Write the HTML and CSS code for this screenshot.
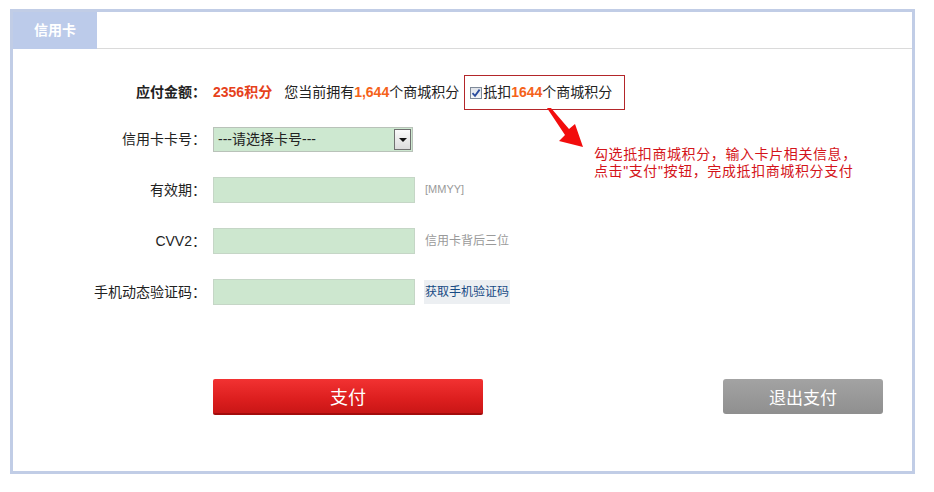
FILE: index.html
```html
<!DOCTYPE html>
<html lang="zh-CN">
<head>
    <meta charset="UTF-8">
    <meta name="viewport" content="width=device-width, initial-scale=1.0">
    <link rel="stylesheet" href="styles.css">
    <title>信用卡支付</title>
</head>
<body>
    <div class="frame">
        <div class="tabs">
            <span class="tab">信用卡</span>
        </div>

        <div class="form">
            <div class="row row-amount">
                <span class="label strong">应付金额：</span>
                <span class="amount">2356积分</span>
                <span class="own">您当前拥有<b class="points">1,644</b>个商城积分</span>
                <span class="deduct">
                    <span class="check">
                        <svg width="10" height="10" viewBox="0 0 10 10"><path d="M1.5 5.2 L4 7.8 L8.6 1.6" fill="none" stroke="#2b4c9e" stroke-width="1.8"/></svg>
                    </span>抵扣<b class="points">1644</b>个商城积分
                </span>
            </div>

            <div class="row">
                <span class="label">信用卡卡号：</span>
                <div class="select">
                    <span class="select-text">---请选择卡号---</span>
                    <span class="select-btn"></span>
                </div>
            </div>

            <div class="row">
                <span class="label">有效期：</span>
                <input class="field" type="text">
                <span class="hint hint-small">[MMYY]</span>
            </div>

            <div class="row">
                <span class="label">CVV2：</span>
                <input class="field" type="text">
                <span class="hint">信用卡背后三位</span>
            </div>

            <div class="row">
                <span class="label">手机动态验证码：</span>
                <input class="field" type="text">
                <a class="sms" href="#">获取手机验证码</a>
            </div>

            <div class="actions">
                <button class="btn-pay">支付</button>
                <button class="btn-exit">退出支付</button>
            </div>
        </div>

        <!-- 提示说明 -->
        <svg class="arrow" width="42" height="44" viewBox="0 0 42 44">
            <polygon points="2,2 6,2 24,23 30,18 38,41 14,35 20,29" fill="#f20d0d"/>
        </svg>
        <p class="note">勾选抵扣商城积分，输入卡片相关信息，<br>点击"支付"按钮，完成抵扣商城积分支付</p>
    </div>
</body>
</html>
```

FILE: styles.css
```css
body{
    margin: 0;
    padding: 9px 0 0 10px;
    font-family: "Liberation Sans", "Noto Sans CJK SC", sans-serif;
    font-size: 14px;
    line-height: 1.2;
    color: #222;
    background: #fff;
}
.frame{
    position: relative;
    box-sizing: border-box;
    width: 905px;
    height: 465px;
    border: 3px solid #c1cde6;
}
.tabs{
    display: flex;
    height: 36px;
    border-bottom: 1px solid #dadada;
}
.tab{
    display: flex;
    align-items: center;
    justify-content: center;
    width: 84px;
    height: 37px;
    background: #bccbea;
    color: #fff;
    font-weight: bold;
}
.form{
    padding-top: 26px;
}
.row{
    display: flex;
    align-items: center;
    height: 26px;
    margin-bottom: 25px;
}
.row-amount{
    height: 35px;
    margin-bottom: 16px;
}
.label{
    width: 193px;
    margin-right: 7px;
    text-align: right;
}
.strong{
    font-weight: bold;
}
.amount{
    color: #e6411b;
    font-weight: bold;
}
.own{
    margin-left: 12px;
}
.points{
    color: #f5621a;
}
.deduct{
    display: flex;
    align-items: center;
    box-sizing: border-box;
    height: 35px;
    margin-left: 5px;
    padding: 0 12px 0 5px;
    border: 1px solid #b3262a;
}
.check{
    display: flex;
    align-items: center;
    justify-content: center;
    box-sizing: border-box;
    width: 12px;
    height: 12px;
    margin-right: 1px;
    border: 1px solid #7f8a99;
    background: linear-gradient(#dfe3ea, #f6f7f9);
}
.select{
    display: flex;
    align-items: center;
    justify-content: space-between;
    box-sizing: border-box;
    width: 200px;
    height: 25px;
    padding: 0 1px 0 4px;
    border: 1px solid #b9c2b9;
    background: #cde8d0;
}
.select-btn{
    position: relative;
    box-sizing: border-box;
    width: 17px;
    height: 21px;
    border: 1px solid #707070;
    background: linear-gradient(#fafafa, #dcdcdc);
}
.select-btn::after{
    content: "";
    position: absolute;
    left: 4px;
    top: 8px;
    border-left: 4px solid transparent;
    border-right: 4px solid transparent;
    border-top: 4px solid #111;
}
.field{
    box-sizing: border-box;
    width: 202px;
    height: 26px;
    margin: 0;
    border: 1px solid #c5d6c6;
    background: #cde7cf;
}
.hint{
    margin-left: 10px;
    color: #9a9a9a;
    font-size: 12px;
}
.hint-small{
    font-size: 11px;
}
.sms{
    display: flex;
    align-items: center;
    height: 24px;
    margin-left: 9px;
    padding: 0 1px;
    background: #eceff2;
    color: #174a84;
    font-size: 12px;
    text-decoration: none;
}
.actions{
    display: flex;
    align-items: flex-start;
    margin-top: 74px;
}
.actions button{
    font-family: "Liberation Sans", "Noto Sans CJK SC", sans-serif;
    color: #fff;
    border: none;
    cursor: pointer;
}
.btn-pay{
    width: 270px;
    height: 36px;
    margin-left: 200px;
    border-radius: 2px;
    border-bottom: 2px solid #a30c0c !important;
    background: linear-gradient(#f23232, #dc1e1e 60%, #c91616);
    font-size: 18px;
}
.btn-exit{
    width: 160px;
    height: 35px;
    margin-left: 240px;
    border-radius: 3px;
    background: linear-gradient(#a3a3a3, #8f8f8f);
    font-size: 17px;
}
.arrow{
    position: absolute;
    left: 532px;
    top: 94px;
}
.note{
    position: absolute;
    left: 581px;
    top: 134px;
    margin: 0;
    color: #d4141a;
    font-size: 14px;
    line-height: 17px;
    letter-spacing: 0.6px;
}
```
